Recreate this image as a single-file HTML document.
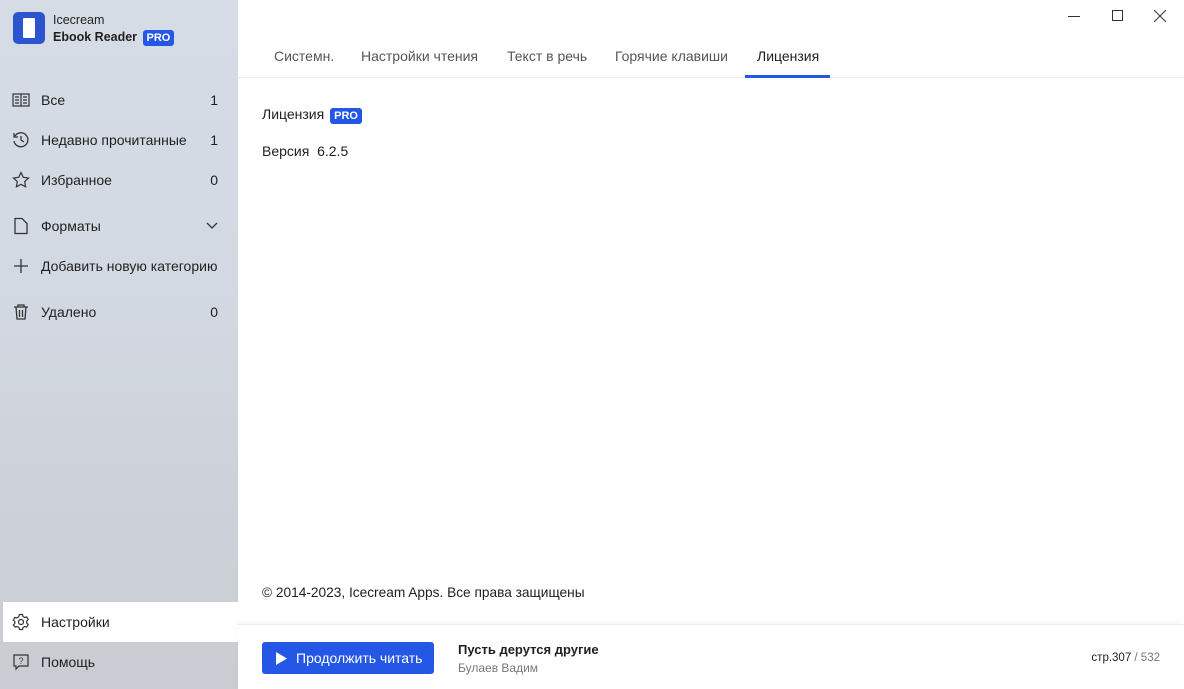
<!DOCTYPE html>
<html><head><meta charset="utf-8"><style>
*{margin:0;padding:0;box-sizing:border-box}
body{width:1184px;height:689px;overflow:hidden;font-family:"Liberation Sans","Noto Sans CJK SC",sans-serif;font-size:14px;color:#1f1f1f;position:relative;background:#fff}
.side{position:absolute;left:0;top:0;width:238px;height:689px;background:linear-gradient(180deg,#d6dce6 0%,#d3d9e2 40%,#cdd2da 70%,#c9ccd2 100%)}
.item{position:absolute;left:0;width:238px;height:40px;display:flex;align-items:center}
.item .ic{position:absolute;left:12px;width:18px;height:18px}
.item .t{position:absolute;left:41px;font-size:14px}
.item .n{position:absolute;right:20px}
.main{position:absolute;left:238px;top:0;right:0;height:689px;background:#fff}
.tabs{position:absolute;left:0;top:40px;right:0;height:38px;border-bottom:1px solid #ececec}
.tab{position:absolute;top:8px;font-size:14px;color:#555}
.pro{display:inline-block;background:#2457e6;color:#fff;font-weight:bold;font-size:11px;padding:1px 4px;border-radius:3px;line-height:14px}
</style></head><body>
<div class="side">
 <div style="position:absolute;left:13px;top:12px;width:32px;height:32px;background:#2d54cf;border-radius:5px"><div style="position:absolute;left:10px;top:6px;width:12px;height:20px;background:#fff;border-radius:1px"></div></div>
 <div style="position:absolute;left:53px;top:13px;font-size:12.5px">Icecream</div>
 <div style="position:absolute;left:53px;top:30px;font-size:12.5px;font-weight:bold">Ebook Reader <span class="pro" style="margin-left:2px">PRO</span></div>
 <div class="item" style="top:80px"><svg class="ic" viewBox="0 0 18 18" fill="none" stroke="#333" stroke-width="1.2"><rect x="1" y="3" width="16" height="12"/><path d="M9 3v12M3 6h4M3 9h4M3 12h4M11 6h4M11 9h4M11 12h4"/></svg><span class="t">Все</span><span class="n">1</span></div>
 <div class="item" style="top:120px"><svg class="ic" viewBox="0 0 18 18" fill="none" stroke="#333" stroke-width="1.3"><path d="M3 5a7 7 0 1 1-1 5M2 2v4h4M9 5v4l3 2"/></svg><span class="t">Недавно прочитанные</span><span class="n">1</span></div>
 <div class="item" style="top:160px"><svg class="ic" viewBox="0 0 18 18" fill="none" stroke="#333" stroke-width="1.2"><path d="M9 1.5l2.3 4.8 5.2.7-3.8 3.6.9 5.2L9 13.3l-4.6 2.5.9-5.2L1.5 7l5.2-.7z"/></svg><span class="t">Избранное</span><span class="n">0</span></div>
 <div class="item" style="top:206px"><svg class="ic" viewBox="0 0 18 18" fill="none" stroke="#333" stroke-width="1.3"><path d="M3 1.5h7l5 5v10H3z"/></svg><span class="t">Форматы</span><svg style="position:absolute;right:20px" width="12" height="8" viewBox="0 0 12 8" fill="none" stroke="#333" stroke-width="1.3"><path d="M1 1l5 5 5-5"/></svg></div>
 <div class="item" style="top:246px"><svg class="ic" viewBox="0 0 18 18" fill="none" stroke="#333" stroke-width="1.3"><path d="M9 2v14M2 9h14"/></svg><span class="t">Добавить новую категорию</span></div>
 <div class="item" style="top:292px"><svg class="ic" viewBox="0 0 18 18" fill="none" stroke="#333" stroke-width="1.3"><path d="M2 4h14M6 4V2h6v2M4 4l1 12h8l1-12M7.5 7v7M10.5 7v7"/></svg><span class="t">Удалено</span><span class="n">0</span></div>
 <div class="item" style="top:602px;background:#fff;left:3px;width:235px"><svg class="ic" style="left:9px" viewBox="0 0 18 18" fill="none" stroke="#333" stroke-width="1.2"><circle cx="9" cy="9" r="2.5"/><path d="M7.5 1.5h3l.5 2 1.7 1 2-.6 1.5 2.6-1.5 1.5v2l1.5 1.5-1.5 2.6-2-.6-1.7 1-.5 2h-3l-.5-2-1.7-1-2 .6L1.3 12l1.5-1.5v-2L1.3 7l1.5-2.6 2 .6 1.7-1z"/></svg><span class="t" style="left:38px">Настройки</span></div>
 <div class="item" style="top:642px"><svg class="ic" viewBox="0 0 18 18" fill="none" stroke="#333" stroke-width="1.2"><path d="M2 2h14v11H7l-3 3v-3H2z"/><text x="9" y="11" font-size="9" text-anchor="middle" fill="#333" stroke="none">?</text></svg><span class="t">Помощь</span></div>
</div>
<div class="main">
 <svg style="position:absolute;right:104px;top:16px" width="12" height="2"><rect width="12" height="1" fill="#333"/></svg>
 <div style="position:absolute;right:61px;top:10px;width:11px;height:11px;border:1px solid #333"></div>
 <svg style="position:absolute;right:18px;top:10px" width="12" height="12" stroke="#333"><path d="M0 0l12 12M12 0L0 12"/></svg>
 <div class="tabs">
  <span class="tab" style="left:36px">Системн.</span>
  <span class="tab" style="left:123px">Настройки чтения</span>
  <span class="tab" style="left:269px">Текст в речь</span>
  <span class="tab" style="left:377px">Горячие клавиши</span>
  <span class="tab" style="left:519px;color:#1f1f1f">Лицензия</span>
  <div style="position:absolute;left:507px;top:35px;width:85px;height:3px;background:#2457e6"></div>
 </div>
 <div style="position:absolute;left:24px;top:106px">Лицензия <span class="pro" style="margin-left:2px">PRO</span></div>
 <div style="position:absolute;left:24px;top:143px">Версия&nbsp; 6.2.5</div>
 <div style="position:absolute;left:24px;top:585px;font-size:13.7px">© 2014-2023, Icecream Apps. Все права защищены</div>
 <div style="position:absolute;left:0;right:0;top:624px;height:65px;border-top:1px solid #eee;box-shadow:0 -2px 6px rgba(0,0,0,.04)">
  <div style="position:absolute;left:24px;top:17px;width:172px;height:32px;background:#2457e6;border-radius:3px;color:#fff;font-size:14px;line-height:32px;padding-left:34px"><svg style="position:absolute;left:14px;top:10px" width="11" height="13"><path d="M0 0l11 6.5L0 13z" fill="#fff"/></svg>Продолжить читать</div>
  <div style="position:absolute;left:220px;top:17px;font-weight:bold;font-size:13px">Пусть дерутся другие</div>
  <div style="position:absolute;left:220px;top:36px;font-size:12px;color:#777">Булаев Вадим</div>
  <div style="position:absolute;right:24px;top:27px;font-size:11.5px">стр.307 <span style="color:#777">/ 532</span></div>
 </div>
</div>
</body></html>
